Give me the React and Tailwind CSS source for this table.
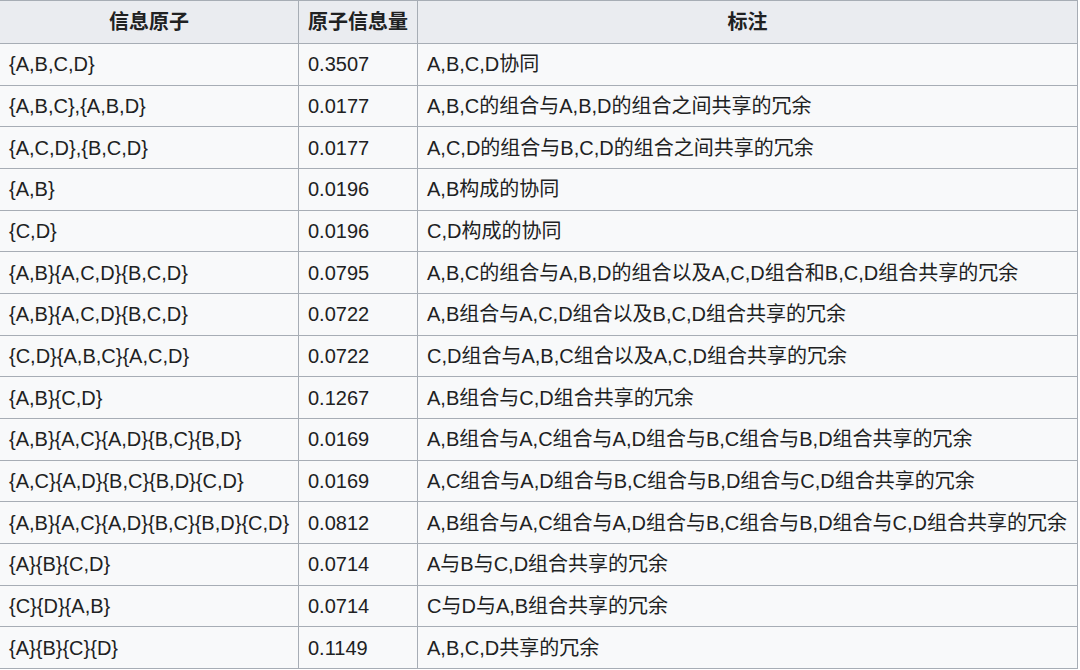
const rows = [
  ['{A,B,C,D}', '0.3507', 'A,B,C,D协同'],
  ['{A,B,C},{A,B,D}', '0.0177', 'A,B,C的组合与A,B,D的组合之间共享的冗余'],
  ['{A,C,D},{B,C,D}', '0.0177', 'A,C,D的组合与B,C,D的组合之间共享的冗余'],
  ['{A,B}', '0.0196', 'A,B构成的协同'],
  ['{C,D}', '0.0196', 'C,D构成的协同'],
  ['{A,B}{A,C,D}{B,C,D}', '0.0795', 'A,B,C的组合与A,B,D的组合以及A,C,D组合和B,C,D组合共享的冗余'],
  ['{A,B}{A,C,D}{B,C,D}', '0.0722', 'A,B组合与A,C,D组合以及B,C,D组合共享的冗余'],
  ['{C,D}{A,B,C}{A,C,D}', '0.0722', 'C,D组合与A,B,C组合以及A,C,D组合共享的冗余'],
  ['{A,B}{C,D}', '0.1267', 'A,B组合与C,D组合共享的冗余'],
  ['{A,B}{A,C}{A,D}{B,C}{B,D}', '0.0169', 'A,B组合与A,C组合与A,D组合与B,C组合与B,D组合共享的冗余'],
  ['{A,C}{A,D}{B,C}{B,D}{C,D}', '0.0169', 'A,C组合与A,D组合与B,C组合与B,D组合与C,D组合共享的冗余'],
  ['{A,B}{A,C}{A,D}{B,C}{B,D}{C,D}', '0.0812', 'A,B组合与A,C组合与A,D组合与B,C组合与B,D组合与C,D组合共享的冗余'],
  ['{A}{B}{C,D}', '0.0714', 'A与B与C,D组合共享的冗余'],
  ['{C}{D}{A,B}', '0.0714', 'C与D与A,B组合共享的冗余'],
  ['{A}{B}{C}{D}', '0.1149', 'A,B,C,D共享的冗余'],
];

const cell = 'border border-[#a7adb5] px-[9px] py-0 text-left align-middle whitespace-nowrap';
const head = 'border border-[#a7adb5] px-[9px] py-0 text-center align-middle font-bold bg-[#eaecf0] whitespace-nowrap';

export default function App() {
  return (
    <div className="w-[1080px] h-[670px] overflow-hidden bg-white">
      <table
        className="-ml-px w-[1079px] table-fixed border-collapse bg-[#f8f9fa] text-[20px] leading-[24px] text-[#202122]"
        style={{ fontFamily: '"Liberation Sans", "Noto Sans CJK SC", sans-serif' }}
      >
        <colgroup>
          <col className="w-[299px]" />
          <col className="w-[119px]" />
          <col />
        </colgroup>
        <thead>
          <tr className="h-[43px]">
            <th className={head}>信息原子</th>
            <th className={head}>原子信息量</th>
            <th className={head}>标注</th>
          </tr>
        </thead>
        <tbody>
          {rows.map((r, i) => (
            <tr key={i} className="h-[41.67px]">
              <td className={cell}>{r[0]}</td>
              <td className={cell}>{r[1]}</td>
              <td className={cell}>{r[2]}</td>
            </tr>
          ))}
        </tbody>
      </table>
    </div>
  );
}
